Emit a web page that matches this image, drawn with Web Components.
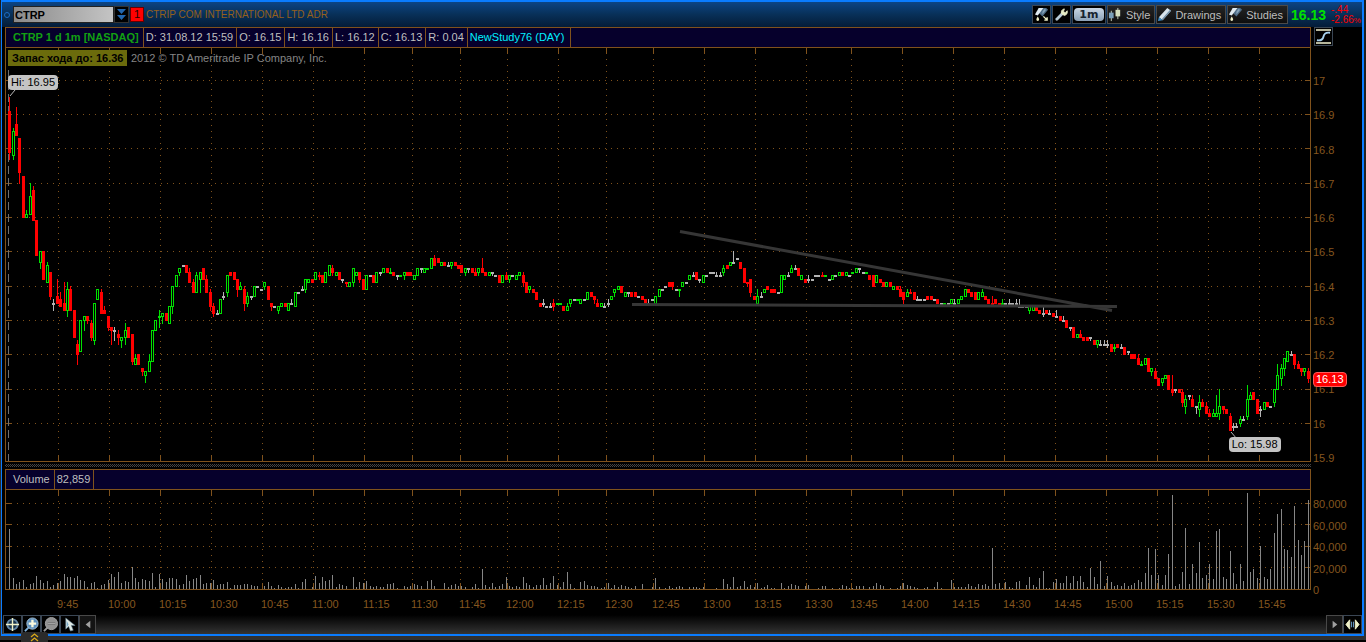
<!DOCTYPE html>
<html lang="en">
<head>
<meta charset="utf-8">
<title>CTRP 1 d 1m</title>
<style>
  html, body { margin: 0; height: 100%; background: #000; }
  body { font: 11px/14px "Liberation Sans", Arial, sans-serif; color: #bfbfbf; }
</style>
</head>
<body>
<chart-window></chart-window>

<script>
const GRID = '#80521c';
const UP = '#00e000';
const DOWN = '#ff0000';
const FLAT = '#b4b4b4';

// one entry per minute bar, in cents over 16.00: "open close [high low]".
// a single number is a flat bar, "+" marks a flat bar that closed up
const BARS = `
91 79 95 77,78 85 86 77,87 84 92 84,83 73 83 70,72 60,60 61 62 60,61 66 70 61,68 59 69 59,59 49,47 50 50 45,
50 42,41 46 47 41,44 37 44 36,35 35 36 33,37 35 42 35,36 34 38 34,35 33 41 33,33 39 41 31,39 33 40 33,33 25,
23 20 24 17,21 30,30 31 31 27,31 30 31 29,29 25 30 24,24 35 35 23,36 39,38 32 39 32,33 32 34 32,31 28 31 27,
28 27 28 23,27 27 28 24,26 25 27 23,24 25 25 22,25 27 29 23,28 25,26 18 26 17,17 19 20 17,20 17,16 15 16 14,
14 15 15 12,15 18 20 15,18 27,27 30,31+ 31 33 28,31 32 32 29,32 30,29 34,34 40 40 32,40 43,
44 45 45 43,46,46 44,44 41 45 41,41 38 42 38,38 43 44 38,42 44 44 38,45 42,42 38 43 38,38 34 39 33,
34 32 35 31,32 32 33 32,32 36,37 37 38 36,38 43 43 37,44 43,44 42,42 39 42 37,39 40 41 39,39 35 40 33,
35 37 38 34,37 37 37 36,37 40,40,39,40 41 41 39,40 36,35 34 35 33,34,33 34 34 32,
34 35,35 34,33 35,35 35 36 35,34 38,38,39 39 40 39,39 42 42 38,41 42,42 41,
42 44,43 43- 44 42,43 41,41 44,43 46,45 44 46 43,43 44 44 43,44 42,42 42 42 41,41 41- 41 40,
40 41,41 45 45 40,43 44,44 42 44 41,42 39,39 43,43,43 41,41 44,44 44 44 43,
44 45,45 44,44+ 44 45 44,44 43,43 43 43 42,43+,43 44 44 42,44 43,44 43,42 43,
43 45,45 45 45 44,44 45,45+,45 48,48 46 49 46,48 47,46 47,47 46,46 46 47 46,
46 47 47 45,47 46,46 45,46 44,44 45 45 43,45 45 45 44,45 44,44 43 45 43,44 45 45 43,45 44 48 44,
44 43,43 44,44 44 44 43,43,43 41,41 43,43 42 44 42,42 43 43 41,43,42 43,
43 44 44 43,43 41 44 40,41 38,39 40 40 38,39 38,38 36,35 34,35 35 36 34,34,34 34 35 34,
35 34 36 33,35+,35+,34 33 34 33,33 34 35 33,35 36 36 34,36,36+,35 36,36,
36 38,38 37,37 36 37 35,35 34 36 34,34 35,34 34 35 34,35 35 36 34,36 37,38 39 39 37,39 40,
40 38,37 38,38 38 38 37,38 37,38 37,37,37 36,36 35,35 35 36 35,36,
35 37,37 39,39,40,41 40,41 40 41 39,39,39+ 39 39 37,40 41,41,
42 43,43 43 44 43,44 42,42 42 42 41,41 43,43,44,44,43 43 44 43,43 43 44 43,
44 45 46 43,46 45 46 45,46 47,47 47 50 47,48,47 45,45 41,41 41- 41 40,42 38 42 37,37 36,
35 37 39 35,37 37 38 37,38 39,40 39,39 38,39 38,38,38 43,42 43,43 43 44 43,
44 45 46 44,45 45 46 45,45 43,42 43,42 41,42 42 43 41,42,43,43,43 43- 44 43,
43+,42,42 43,43,43 44,44 43,43 44,43,44+,44 45,
45 45 45 44,44,44+,43 42,43 40,41 43,42 41,41 40,40 41,41 40,
39 40,40 39,39 37 40 37,38 36 38 35,37 38 39 37,38 38- 39 38,38 36,36 36 37 36,36,36,
37 36,37 36,36,36 35,35,35+,35,35 36,35 35 36 35,35 36,
36 37,37 39,39 38,38 37,38 36,36 38,37 38 39 37,37 36,36 35,35 35- 37 35,
36 35,35 35-,35+ 35 36 35,35,35 35 36 35,35,35 35 36 34,34 34 36 34,34,34,
33 34 34 32,33 34,34 33,33 32,32 32 34 31,33 32,32 32 33 32,32 31,31 31 33 31,31 30,
30 30 31 30,30 28,28 28 28 27,28 25,25 26,26 25 27 25,25 24,25 24,25 25 25 24,24 23,
23 24 24 22,23 23 24 23,23 23 24 23,23 23 24 22,23 21,22+ 22 23 21,23 22,22 22 23 22,22 20,21 21 21 20,
20 19,20 19,19 17 20 17,17+ 17 18 17,17 19,19 15,15 16 16 14,15 13 16 13,13 11,12 13 13 11,
13 14,14 10,10 9 14 8,10 10 10 9,10 9,9 6 10 5,5 7 8 3,8 8 8 7,7 5 8 5,5 5 5 3,
4 6 8 2,6 5 7 5,5 3 6 3,3 2 4 2,2 3 4 2,2 3 8 2,3 5 10 1,5 4 5 3,4 3,2 -2 3 -2,
-1 -1 0 -2,-1 -1 0 -1,0 1 2 -1,1 1 2 1,2 7 11 1,7 8 9 7,9 7,7 3,4 4 5 2,4 6,
6 5,5,6 10 10 5,10 14 17 10,13 16 17 11,16 19 19 14,18 21,20 20 21 20,20 17 20 16,17 16 18 16,
16 15 16 14,15 16 16 14,15 13 16 12`;

// bar heights of the volume study, one per minute bar
const VOLUME = `
60 11 5 7 9 2 5 6 13 9 6 8 2 4 6 8 15 12 12 11 13 9 8 2 6 7 1 4 5 9 15 12 17 6 8 7 22 11 7 10
9 8 16 2 15 10 7 11 11 10 4 5 14 8 10 11 14 5 6 6 9 4 5 5 7 1 4 4 4 5 5 4 3 3 0 3 7 3 1 4
2 1 2 2 5 1 7 10 0 2 13 6 12 8 9 14 2 5 4 3 0 12 2 7 6 8 3 2 3 2 2 5 5 6 1 0 3 2 3 5
4 3 0 8 9 3 0 0 6 2 4 5 3 3 2 0 2 5 1 20 4 2 6 2 3 5 12 3 2 3 2 12 6 4 2 4 4 11 4 6
13 4 2 7 17 5 1 0 7 8 4 3 3 2 1 2 6 1 4 2 4 3 2 1 3 0 5 0 0 2 11 2 0 1
3 1 2 3 2 0 2 2 2 1 2 0 0 0 1 0 10 5 2 12 2 3 8 2 4 2 6 1
2 4 1 1 0 6 1 3 5 4 3 0 3 4 0 0 1 3 3 0 1 0 1 4 3 1 1 3 3 3
0 2 3 6 4 3 0 1 0 1 3 6 4 3 2 1 0 1 2 0 2 7 1 0 0 9 2 2 2 2
5 3 2 5 4 5 3 41 5 6
1 7 2 1 7 8 0 4 12 4 2 11 18 1 1 7 10 6 6 13 6 13 8 13 7 2 21 12 5 28
3 13 7 3 4 3 6 3 4 6 9 7 16 41 14 40 14 4 14 35 94 3 5 17 61 5 25 16 47 11
14 25 10 58 60 12 10 38 16 5 25 8 96 17 20 11 43 12 10 20 56 75 80 40 39 32 83 49 34 48 89`;

// quarter hours and their grid lines; thin trading drops some minutes
const TIMES = [
  ['9:45', 58], ['10:00', 109], ['10:15', 160], ['10:30', 211], ['10:45', 262],
  ['11:00', 313], ['11:15', 364], ['11:30', 412], ['11:45', 460], ['12:00', 507],
  ['12:15', 558], ['12:30', 606], ['12:45', 653], ['13:00', 704], ['13:15', 755],
  ['13:30', 806], ['13:45', 851], ['14:00', 902], ['14:15', 953], ['14:30', 1004],
  ['14:45', 1055], ['15:00', 1106], ['15:15', 1157], ['15:30', 1208], ['15:45', 1259]
];

const LEFT = 5;
const RIGHT = 1311;
const barX = i => Math.floor(9.6 + 3.4 * i);
const priceY = c => Math.floor(80.3 + (100 - c) * 3.43);
const rect = (x, y, w, h) => `M${x} ${y}h${w}v${h}h${-w}z`;

class BaseElement extends HTMLElement {
  connectedCallback() {
    if (!this.shadowRoot) {
      this.attachShadow({ mode: 'open' });
      this.shadowRoot.innerHTML = this.render();
    }
  }
}

function gridPath(top, bottom, rows) {
  let lines = '';
  let dots = '';
  for (const [, x] of TIMES) {
    lines += rect(x, top, 1, 6) + rect(x, bottom - 6, 1, 6);
    for (let y = top + 11; y < bottom - 6; y += 6) dots += rect(x, y, 1, 1);
  }
  for (const y of rows) {
    lines += rect(LEFT, y, 7, 1) + rect(RIGHT - 6, y, 6, 1);
    for (let x = LEFT + 12; x < RIGHT - 8; x += 6) dots += rect(x, y, 1, 1);
  }
  lines += rect(LEFT, top, 1, bottom - top) + rect(RIGHT - 1, top, 1, bottom - top) + rect(LEFT, bottom, RIGHT - LEFT, 1);
  return `<path fill="${GRID}" d="${lines}${dots}"/>`;
}

// -- price-plot --
class PricePlot extends BaseElement {
  render() {
    let up = '', upHole = '', down = '', flat = '';
    BARS.trim().split(/\s*,\s*/).forEach((bar, i) => {
      const n = bar.split(' ').map(parseFloat);
      const open = n[0];
      const close = n.length > 1 ? n[1] : open;
      const high = n.length > 2 ? n[2] : Math.max(open, close);
      const low = n.length > 2 ? n[3] : Math.min(open, close);
      const x = barX(i);
      const y = priceY(Math.max(open, close));
      const h = Math.max(2, priceY(Math.min(open, close)) - y + 1);
      const shape = rect(x - 1, y, 3, h) + rect(x, priceY(high), 1, priceY(low) - priceY(high) + 1);
      if (close > open || bar.includes('+')) {
        up += shape;
        if (h > 2) upHole += rect(x, y + 1, 1, h - 2);
      } else if (close < open || /\d-/.test(bar)) {
        down += shape;
      } else {
        flat += shape;
      }
    });
    const rows = [100, 90, 80, 70, 60, 50, 40, 30, 20, 10, 0].map(priceY);
    return `
      <style>
        :host { display: block; position: relative; min-height: 200px; }
        svg { position: absolute; width: 100%; height: 100%; display: block; }
        .study, ::slotted(*) { position: absolute; }
        .study {
          top: 2px; left: 3px; display: flex; align-items: center; gap: 4px;
          color: #858585; white-space: nowrap;
        }
        .study b { background: #6b6b0c; color: #000; padding: 1px 4px; width: 111px; }
      </style>
      <svg viewBox="5 48 1306 414" preserveAspectRatio="none" shape-rendering="crispEdges" aria-label="CTRP price chart">
        ${gridPath(48, 461, rows)}
        <path d="M8.5 58V461" stroke="#6e6e6e" stroke-dasharray="8 4"/>
        <path fill="${FLAT}" d="${flat}"/>
        <path fill="${DOWN}" d="${down}"/>
        <path fill="${UP}" d="${up}"/>
        <path fill="#000" d="${upHole}"/>
        <g stroke="#363636" stroke-width="3" shape-rendering="auto">
          <path d="M680 231.5L1112 310.5M632 304.5L860 305.5L1117 306.5"/>
        </g>
        <path d="M15 90L10 96M1231 432L1237 439" stroke="#b8b8b8" shape-rendering="auto"/>
      </svg>
      <div class="study"><b>Запас хода до: 16.36</b><span>2012 © TD Ameritrade IP Company, Inc.</span></div>
      <slot></slot>
    `;
  }
}
customElements.define('price-plot', PricePlot);

// -- volume-plot --
class VolumePlot extends BaseElement {
  render() {
    const bars = VOLUME.trim().split(/\s+/)
      .map((h, i) => rect(barX(i), 589 - h, 1, h)).join('');
    return `
      <style>
        :host { display: block; height: 100px; }
        svg { width: 100%; height: 100%; display: block; }
      </style>
      <svg viewBox="5 490 1306 100" preserveAspectRatio="none" shape-rendering="crispEdges" aria-label="Volume chart">
        ${gridPath(490, 589, [503, 524, 546, 567])}
        <path fill="#868686" d="${bars}"/>
      </svg>
    `;
  }
}
customElements.define('volume-plot', VolumePlot);

// -- price-flag --
class PriceFlag extends BaseElement {
  render() {
    return `
      <style>
        :host {
          display: block; box-sizing: border-box; height: 15px; padding: 0 3px;
          border-radius: 4px; background: #c4c4c4; color: #000; white-space: nowrap;
        }
        :host([last]) { background: #f00; color: #fff; border: 1px solid #ff5a5a; padding: 0 2px; line-height: 13px; }
      </style>
      <slot></slot>
    `;
  }
}
customElements.define('price-flag', PriceFlag);

// -- value-axis --
class ValueAxis extends BaseElement {
  render() {
    const labels = this.getAttribute('labels').split(' ');
    return `
      <style>
        :host {
          display: flex; flex-direction: column; justify-content: space-between;
          position: relative; padding-left: 2px; color: #85561f;
        }
        ::slotted(*) { position: absolute; }
      </style>
      ${labels.map(l => `<span>${l}</span>`).join('')}
      <slot></slot>
    `;
  }
}
customElements.define('value-axis', ValueAxis);

// -- time-axis --
class TimeAxis extends BaseElement {
  render() {
    const starts = [LEFT + 1, ...TIMES.map(t => t[1]), RIGHT + 1];
    const cols = starts.slice(1).map((x, i) => `minmax(0, ${x - starts[i]}fr)`).join(' ');
    return `
      <style>
        :host { display: grid; grid-template-columns: ${cols}; padding-top: 7px; color: #85561f; white-space: nowrap; }
      </style>
      <span></span>${TIMES.map(t => `<span>${t[0]}</span>`).join('')}
    `;
  }
}
customElements.define('time-axis', TimeAxis);

// -- info-bar --
class InfoBar extends BaseElement {
  render() {
    return `
      <style>
        :host {
          display: flex; box-sizing: border-box; height: 21px;
          border: 1px solid ${GRID}; background: #06002c;
        }
        ::slotted(*) {
          padding: 2px 3px 3px 2px; border-right: 1px solid ${GRID};
          white-space: nowrap; box-sizing: border-box;
        }
        ::slotted(:first-child) { padding-left: 7px; padding-right: 4px; }
      </style>
      <slot></slot>
    `;
  }
}
customElements.define('info-bar', InfoBar);

// -- tool-button --
const ICONS = {
  flashlight: '<path d="M5 1h8l2 2-6 7-4-4z" fill="#4f6d87"/><path d="M5 1h5L4 9 1 8z" fill="#dfeaf0"/><path d="M9 5l2-3 2 1-4 5z" fill="#86a3b8"/><path d="M4 10q3 4 0 5q-3-1 0-5z" fill="#eef0c8"/>',
  wrench: '<path d="M3 13l6-6" stroke="#b9cbd6" stroke-width="3" stroke-linecap="round"/><path d="M8 7q-1-4 3-5l-1 3 2 1 2-2q1 4-3 5z" fill="#e6ecc6" stroke="#e6ecc6"/>',
  candles: '<path d="M3.500 4v11M10.500 1v12" stroke="#c9d4c0"/><path fill="#7ba0b9" d="M1 6h5v6H1z"/><path fill="#d5dfbd" d="M8 3h5v7H8z"/>',
  pencil: '<path d="M2 11L11 1l4 3-9 10z" fill="#d8e4ec"/><path d="M5 13l9-10 1 1-9 10z" fill="#6f8ea6"/><path d="M2 11l4 3-5 1z" fill="#3f8fc8"/>',
  curve: '<path d="M0 1h16M0 15h16" stroke="#f3f3d0" stroke-width="1.500"/><path d="M1 12q6 1 7-4t7-4" fill="none" stroke="#a6d0ee" stroke-width="2"/>',
  cross: '<circle cx="8" cy="8" r="5.500" fill="#18324a" stroke="#6789a5" stroke-width="2"/><path d="M8 1v14M1 8h14" stroke="#f2f2c8" stroke-width="1.500"/>',
  zoomin: '<path d="M5 11l-4 4" stroke="#7fb0da" stroke-width="2"/><circle cx="9" cy="7" r="6" fill="#5d8fbd" stroke="#a9c6dd"/><path d="M9 3v8M5 7h8" stroke="#fafae0" stroke-width="2.500"/>',
  zoomout: '<path d="M5 11l-4 4" stroke="#999" stroke-width="2"/><circle cx="9" cy="7" r="6.500" fill="#929292" stroke="#a5a5a5"/><path d="M5 7h8" stroke="#777" stroke-width="3"/><path d="M5 7h8" stroke="#aaa"/>',
  pointer: '<path d="M4 1v12l3-3 2 5 3-1-2-5h4z" fill="#dfe9e4" stroke="#58758a" stroke-width=".6"/><path d="M5 4v7l2-3z" fill="#76a7c8"/>',
  left: '<path d="M11 4v8L6 8z" fill="#a0a0a0"/>',
  right: '<path d="M6 4v8l5-4z" fill="#a0a0a0"/>',
  fit: '<path d="M5 3v10L1 8zM11 3v10l4-5z" fill="#eef0c8" stroke="#eef0c8"/><path d="M7 5v6M9 5v6" stroke="#6fa4d0"/>'
};
class ToolButton extends BaseElement {
  render() {
    const icon = this.getAttribute('icon');
    return `
      <style>
        :host { display: block; flex: none; }
        button {
          display: flex; align-items: center; box-sizing: border-box; height: 19px; min-width: 19px;
          padding: 0 1px; border: 1px solid #3a4654; background: #000; color: #bdbdbd; font: inherit;
        }
        svg { width: 15px; height: 15px; flex: none; }
        :host([wide]) button { padding: 0 4px 0 0; border-color: #4a4a4a; background: linear-gradient(#242424, #0e0e0e); }
        :host([wide]) svg { margin-right: 3px; }
        :host([dim]) button { min-width: 17px; padding: 0; border-color: #484848; background: #141414; }
        :host([period]) button { width: 34px; padding: 1px; }
        :host([period]) span {
          flex: 1; border-radius: 4px; background: linear-gradient(#c8d6e4, #8ba1b7);
          color: #16222e; font: bold 11px/13px "DejaVu Sans", sans-serif;
        }
      </style>
      <button aria-label="${this.getAttribute('label') || this.textContent}">
        ${icon ? `<svg viewBox="0 0 16 16">${ICONS[icon]}${this.hasAttribute('extra') ? '<path d="M10 10l4 4m0-3v3h-3" stroke="#eef0c8" stroke-width="1.500" fill="none"/>' : ''}</svg>` : ''}
        <span><slot></slot></span>
      </button>
    `;
  }
}
customElements.define('tool-button', ToolButton);

// -- symbol-bar --
class SymbolBar extends BaseElement {
  render() {
    return `
      <style>
        :host {
          display: flex; align-items: center; box-sizing: border-box; height: 25px; padding: 0 1px 0 2px;
          background: linear-gradient(#0c4484, #083058 50%, #041c38); white-space: nowrap;
        }
        .dot { box-sizing: border-box; width: 6px; height: 6px; border: 1px solid #1b6cc4; border-radius: 50%; margin-right: 3px; }
        .symbol { display: flex; }
        input {
          box-sizing: border-box; width: 101px; height: 17px; padding: 0 1px; border: 1px solid #222;
          background: linear-gradient(90deg, #8a8a8a, #c4c4c4); color: #000; font: bold 11px "Liberation Sans", Arial, sans-serif;
        }
        .drop { width: 15px; height: 17px; padding: 0; border: 1px solid #333; background: #000; display: flex; }
        .drop svg { width: 13px; height: 15px; }
        .link {
          width: 14px; height: 15px; margin: 0 2px 0 1px; padding: 0; border: 1px solid #600;
          background: #f00; color: #200; font: inherit; line-height: 13px;
        }
        .name { flex: 1; color: #94601c; font-size: 10px; overflow: hidden; }
        .tools { display: flex; gap: 1px; }
        .last { font-size: 14px; color: #00e000; margin: 0 5px 0 3px; }
        .change { width: 30px; color: #f00; font-size: 10px; line-height: 10px; }
        .change small { font-size: 8px; }
        .change div { height: 10px; }
      </style>
      <i class="dot"></i>
      <div class="symbol">
        <input value="CTRP" aria-label="Symbol">
        <button class="drop" aria-label="Symbol list">
          <svg viewBox="0 0 13 15"><path d="M2 2h9L6.500 7zM2 8h9l-4.500 5z" fill="#2166b0"/></svg>
        </button>
      </div>
      <button class="link">1</button>
      <span class="name">CTRIP COM INTERNATIONAL LTD ADR</span>
      <div class="tools">
        <tool-button icon="flashlight" extra label="Quick studies"></tool-button>
        <tool-button icon="wrench" label="Settings"></tool-button>
        <tool-button period>1m</tool-button>
        <tool-button wide icon="candles">Style</tool-button>
        <tool-button wide icon="pencil">Drawings</tool-button>
        <tool-button wide icon="flashlight">Studies</tool-button>
      </div>
      <b class="last">16.13</b>
      <div class="change"><div>-.44</div><div>-2.66<small>%</small></div></div>
    `;
  }
}
customElements.define('symbol-bar', SymbolBar);

// -- bottom-bar --
class BottomBar extends BaseElement {
  render() {
    return `
      <style>
        :host {
          display: flex; align-items: flex-end; height: 19px; padding-left: 1px;
          background: linear-gradient(#000, #343434);
        }
        .gap { flex: 1; }
      </style>
      <tool-button icon="cross" label="Crosshair"></tool-button>
      <tool-button icon="zoomin" label="Zoom in"></tool-button>
      <tool-button icon="zoomout" label="Zoom out"></tool-button>
      <tool-button icon="pointer" label="Pointer"></tool-button>
      <tool-button icon="left" dim label="Scroll left"></tool-button>
      <div class="gap"></div>
      <tool-button icon="right" dim label="Scroll right"></tool-button>
      <tool-button icon="fit" label="Fit width"></tool-button>
    `;
  }
}
customElements.define('bottom-bar', BottomBar);

// -- chart-window --
class ChartWindow extends BaseElement {
  render() {
    return `
      <style>
        :host {
          display: flex; flex-direction: column; box-sizing: border-box; position: relative;
          min-height: 100vh; padding: 0 2px 0 1px; background: linear-gradient(#1c1c1c, #303030);
          border-bottom: 2px solid #000;
        }
        .frame {
          flex: 1; display: flex; flex-direction: column;
          border: solid #0a7cff; border-width: 2px 2px 2px 1px; background: #000;
        }
        .chart {
          flex: 1; display: grid; padding-left: 3px;
          grid-template: 21px minmax(0, 1fr) 7px 21px 100px 25px / minmax(0, 1fr) 51px;
        }
        .quote { grid-area: 1 / 1; }
        .tool { grid-area: 1 / 2; padding-left: 3px; }
        price-plot { grid-area: 2 / 1; }
        .price { grid-area: 2 / 2 / span 2; padding-top: 26px; padding-bottom: 4px; }
        .split {
          grid-area: 3 / 1; height: 3px; margin-top: 2px;
          background: repeating-conic-gradient(#444 0 25%, #000 0 50%) 0 0 / 2px 2px;
        }
        .vol { grid-area: 4 / 1; }
        volume-plot { grid-area: 5 / 1; }
        .volume { grid-area: 5 / 2 / span 2; padding-top: 7px; padding-bottom: 18px; }
        time-axis { grid-area: 6 / 1; }
        .title { color: #12a012; font-weight: bold; }
        .new { color: #00f0ff; padding-right: 6px; }
        .hi { top: 27px; left: 3px; }
        .lo { top: 94%; left: 93.7%; }
        .last { top: 77%; left: 2px; }
        .strip { height: 4px; }
        .tab {
          position: absolute; left: 21px; bottom: -2px; width: 27px; height: 10px; padding: 0;
          border: 0; border-radius: 3px 3px 0 0; background: #2b2b2b;
        }
        .tab svg { display: block; margin: auto; width: 11px; height: 10px; }
      </style>
      <div class="frame">
        <symbol-bar></symbol-bar>
        <div class="chart">
          <info-bar class="quote">
            <span class="title">CTRP 1 d 1m [NASDAQ]</span>
            <span>D: 31.08.12 15:59</span>
            <span>O: 16.15</span>
            <span>H: 16.16</span>
            <span>L: 16.12</span>
            <span>C: 16.13</span>
            <span>R: 0.04</span>
            <span class="new">NewStudy76 (DAY)</span>
          </info-bar>
          <tool-button class="tool" icon="curve" label="Studies view"></tool-button>
          <price-plot>
            <price-flag class="hi">Hi: 16.95</price-flag>
            <price-flag class="lo">Lo: 15.98</price-flag>
          </price-plot>
          <value-axis class="price" labels="17 16.9 16.8 16.7 16.6 16.5 16.4 16.3 16.2 16.1 16 15.9">
            <price-flag class="last" last>16.13</price-flag>
          </value-axis>
          <div class="split"></div>
          <info-bar class="vol"><span>Volume</span><span>82,859</span></info-bar>
          <volume-plot></volume-plot>
          <value-axis class="volume" labels="80,000 60,000 40,000 20,000 0"></value-axis>
          <time-axis></time-axis>
        </div>
        <bottom-bar></bottom-bar>
      </div>
      <div class="strip"></div>
      <button class="tab" aria-label="Expand">
        <svg viewBox="0 0 11 10"><path d="M2 5l3.500-3L9 5M2 9l3.500-3L9 9" fill="none" stroke="#d8a818" stroke-width="1.300"/></svg>
      </button>
    `;
  }
}
customElements.define('chart-window', ChartWindow);
</script>
</body>
</html>
